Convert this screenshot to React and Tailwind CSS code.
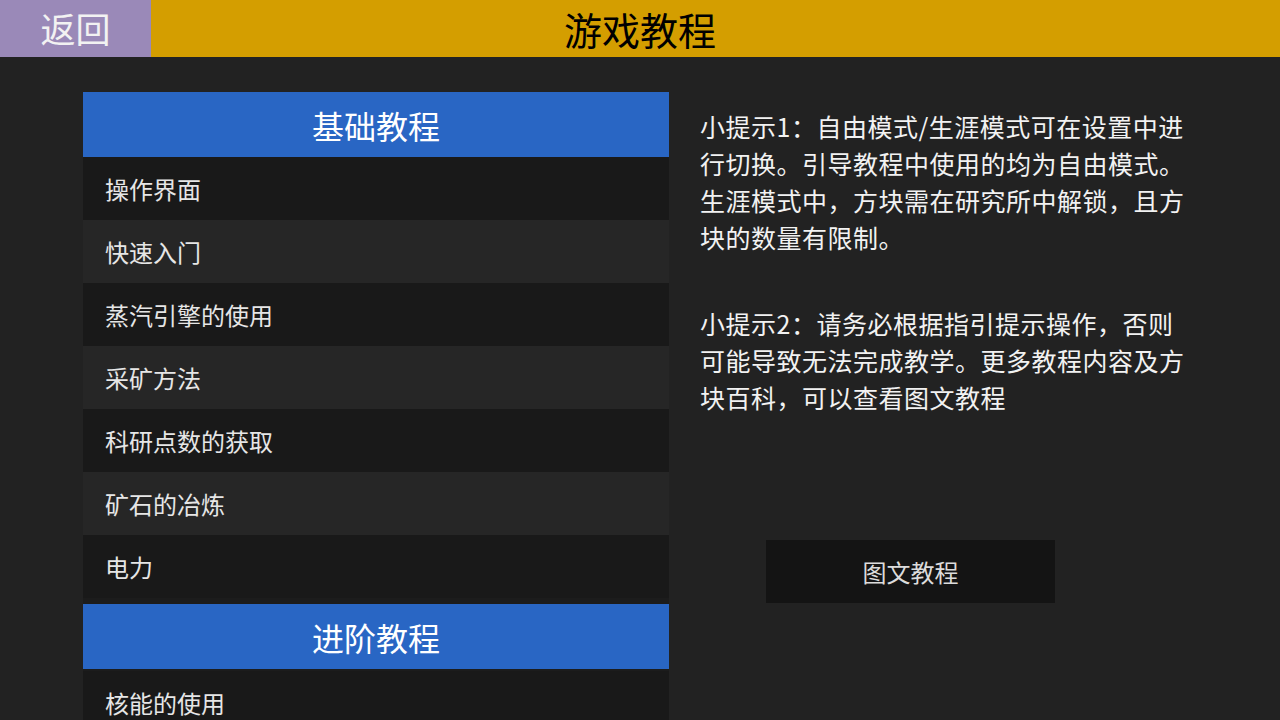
import React from 'react';

const basics = ['操作界面', '快速入门', '蒸汽引擎的使用', '采矿方法', '科研点数的获取', '矿石的冶炼', '电力'];
const advanced = ['核能的使用', '自动化生产', '物流系统'];

const tips = [
  ['小提示1：自由模式/生涯模式可在设置中进', '行切换。引导教程中使用的均为自由模式。', '生涯模式中，方块需在研究所中解锁，且方', '块的数量有限制。'],
  ['小提示2：请务必根据指引提示操作，否则', '可能导致无法完成教学。更多教程内容及方', '块百科，可以查看图文教程'],
];

const font = { fontFamily: '"Noto Sans CJK SC", "Noto Sans", sans-serif' };

const SectionHeader = ({ title }) => (
  <div className="h-[65px] bg-[#2966c4] flex items-center justify-center text-[32px] text-white">
    {title}
  </div>
);

const Row = ({ label, index }) => (
  <div
    className={`h-[63px] flex items-center pl-[22px] text-[24px] text-[#e6e6e6] ${
      index % 2 === 0 ? 'bg-[#191919]' : 'bg-[#262626]'
    }`}
  >
    {label}
  </div>
);

const App = () => {
  return (
    <div className="w-full h-screen overflow-hidden bg-[#222222] flex flex-col" style={font}>
      {/* top bar */}
      <div className="relative h-[57px] bg-[#d49e00] flex items-center justify-center shrink-0">
        <button className="absolute left-0 top-0 h-full w-[151px] bg-[#9a89b8] text-[35px] text-[#f2f2f2] flex items-center justify-center">
          返回
        </button>
        <h1 className="text-[38px] text-black">游戏教程</h1>
      </div>

      <div className="flex pt-[35px] pl-[83px] min-h-0 flex-1">
        {/* tutorial list */}
        <div className="w-[586px] shrink-0 overflow-hidden">
          <SectionHeader title="基础教程" />
          {basics.map((t, i) => (
            <Row key={t} label={t} index={i} />
          ))}
          <div className="h-[6px] bg-[#1c1c1c]" />
          <SectionHeader title="进阶教程" />
          <div className="h-[2px] bg-[#1c1c1c]" />
          {advanced.map((t, i) => (
            <Row key={t} label={t} index={i} />
          ))}
        </div>

        {/* tips */}
        <div className="ml-[31px] w-[500px] pt-[16px] text-[25px] leading-[37px] tracking-[0.5px] text-[#f2f2f2]">
          {tips.map((lines, i) => (
            <p key={i} className={i > 0 ? 'mt-[49px]' : ''}>
              {lines.map((l) => (
                <span key={l} className="block whitespace-nowrap">
                  {l}
                </span>
              ))}
            </p>
          ))}
          <button className="mt-[124px] ml-[66px] w-[289px] h-[63px] bg-[#141414] text-[24px] tracking-normal text-[#dcdcdc] flex items-center justify-center">
            图文教程
          </button>
        </div>
      </div>
    </div>
  );
};

export default App;
